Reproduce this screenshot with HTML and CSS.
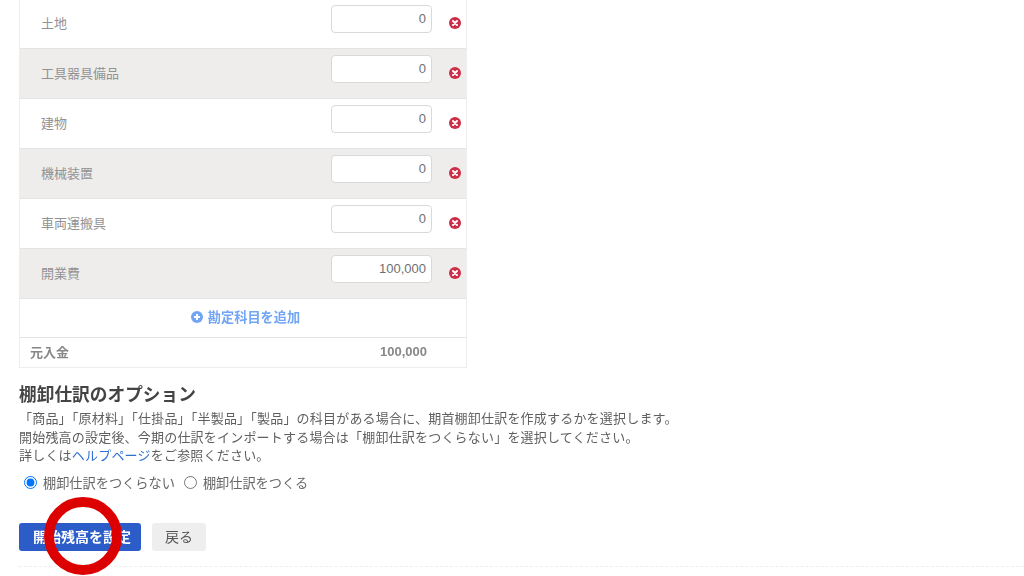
FILE: index.html
```html
<!DOCTYPE html>
<html lang="ja">
<head>
<meta charset="utf-8">
<title>開始残高の設定</title>
<link rel="stylesheet" href="styles.css">
</head>
<body>
<main class="page">
  <section class="ledger">
    <div class="row row-first">
      <span class="row-label">土地</span>
      <input class="amount" type="text" value="0">
      <svg class="remove" viewBox="0 0 12 12"><circle cx="6" cy="6" r="6" fill="#cc2e48"/><path d="M4 4l4 4M8 4l-4 4" stroke="#fff" stroke-width="2" stroke-linecap="round"/></svg>
    </div>
    <div class="row row-alt">
      <span class="row-label">工具器具備品</span>
      <input class="amount" type="text" value="0">
      <svg class="remove" viewBox="0 0 12 12"><circle cx="6" cy="6" r="6" fill="#cc2e48"/><path d="M4 4l4 4M8 4l-4 4" stroke="#fff" stroke-width="2" stroke-linecap="round"/></svg>
    </div>
    <div class="row">
      <span class="row-label">建物</span>
      <input class="amount" type="text" value="0">
      <svg class="remove" viewBox="0 0 12 12"><circle cx="6" cy="6" r="6" fill="#cc2e48"/><path d="M4 4l4 4M8 4l-4 4" stroke="#fff" stroke-width="2" stroke-linecap="round"/></svg>
    </div>
    <div class="row row-alt">
      <span class="row-label">機械装置</span>
      <input class="amount" type="text" value="0">
      <svg class="remove" viewBox="0 0 12 12"><circle cx="6" cy="6" r="6" fill="#cc2e48"/><path d="M4 4l4 4M8 4l-4 4" stroke="#fff" stroke-width="2" stroke-linecap="round"/></svg>
    </div>
    <div class="row">
      <span class="row-label">車両運搬具</span>
      <input class="amount" type="text" value="0">
      <svg class="remove" viewBox="0 0 12 12"><circle cx="6" cy="6" r="6" fill="#cc2e48"/><path d="M4 4l4 4M8 4l-4 4" stroke="#fff" stroke-width="2" stroke-linecap="round"/></svg>
    </div>
    <div class="row row-alt">
      <span class="row-label">開業費</span>
      <input class="amount" type="text" value="100,000">
      <svg class="remove" viewBox="0 0 12 12"><circle cx="6" cy="6" r="6" fill="#cc2e48"/><path d="M4 4l4 4M8 4l-4 4" stroke="#fff" stroke-width="2" stroke-linecap="round"/></svg>
    </div>
    <div class="add-row">
      <svg class="add-icon" viewBox="0 0 12 12"><circle cx="6" cy="6" r="6" fill="#72a5f5"/><path d="M6 3v6M3 6h6" stroke="#fff" stroke-width="2"/></svg>
      <span>勘定科目を追加</span>
    </div>
    <div class="total-row">
      <span>元入金</span>
      <span>100,000</span>
    </div>
  </section>

  <section class="options">
    <h2 class="options-title">棚卸仕訳のオプション</h2>
    <p class="options-text">「商品」「原材料」「仕掛品」「半製品」「製品」の科目がある場合に、期首棚卸仕訳を作成するかを選択します。<br>開始残高の設定後、今期の仕訳をインポートする場合は「棚卸仕訳をつくらない」を選択してください。<br>詳しくは<a class="link" href="#">ヘルプページ</a>をご参照ください。</p>
    <div class="radios">
      <label class="radio"><input type="radio" name="inv" checked><span>棚卸仕訳をつくらない</span></label>
      <label class="radio"><input type="radio" name="inv"><span>棚卸仕訳をつくる</span></label>
    </div>
    <div class="actions">
      <button class="btn btn-primary" type="button">開始残高を設定</button>
      <button class="btn btn-secondary" type="button">戻る</button>
      <span class="ring"></span>
    </div>
    <div class="divider"></div>
  </section>
</main>
</body>
</html>
```
FILE: styles.css
```css
html, body {
  margin: 0;
  height: 100%;
  overflow: hidden;
  background: #fff;
}
body {
  font-family: "Liberation Sans", "Noto Sans CJK JP", sans-serif;
  color: #555;
}
.page {
  width: 1024px;
  padding-left: 19px;
  box-sizing: border-box;
  margin-top: -1px;
  filter: blur(0.5px);
}
.ledger {
  width: 448px;
  border-left: 1px solid #eeeeee;
  border-right: 1px solid #eeeeee;
  border-bottom: 1px solid #eeeeee;
  box-sizing: border-box;
}
.row {
  height: 50px;
  box-sizing: border-box;
  display: flex;
  align-items: center;
  padding-left: 21px;
  border-bottom: 1px solid #e4e4e4;
  background: #fff;
}
.row-alt {
  background: #eeedec;
}
.row-label {
  flex: 1;
  font-size: 13px;
  color: #929292;
  margin-bottom: 3px;
}
.amount {
  width: 101px;
  height: 28px;
  box-sizing: border-box;
  border: 1px solid #d9d9d9;
  border-radius: 4px;
  background: #fff;
  font: 13px "Liberation Sans", sans-serif;
  color: #707070;
  text-align: right;
  padding: 0 5px 0 0;
  margin: 0 0 10px;
}
.remove {
  width: 12px;
  height: 12px;
  margin: 0 5px 2px 17px;
}
.add-row {
  height: 39px;
  box-sizing: border-box;
  display: flex;
  align-items: center;
  justify-content: center;
  gap: 5px;
  padding: 0 0 3px 5px;
  font-size: 13.2px;
  font-weight: 700;
  color: #72a5f5;
  border-bottom: 1px solid #e4e4e4;
}
.add-icon {
  width: 12px;
  height: 12px;
}
.total-row {
  height: 29px;
  box-sizing: border-box;
  display: flex;
  align-items: center;
  justify-content: space-between;
  padding: 0 39px 2px 10px;
  font-size: 13px;
  font-weight: 700;
  color: #888;
}
.options-title {
  margin: 17px 0 0;
  font-size: 17.7px;
  line-height: 20px;
  font-weight: 700;
  color: #444;
}
.options-text {
  margin: 5px 0 0;
  font-size: 13px;
  letter-spacing: 0.2px;
  line-height: 18.5px;
  color: #5f5f5f;
}
.link {
  color: #2f6fd0;
  text-decoration: none;
}
.radios {
  display: flex;
  gap: 9px;
  margin-top: 7px;
  padding-left: 5px;
  font-size: 13.2px;
  color: #666;
}
.radio {
  display: flex;
  align-items: center;
  gap: 6px;
}
.radio input {
  width: 13px;
  height: 13px;
  margin: 0;
}
.actions {
  position: relative;
  display: flex;
  gap: 11px;
  margin-top: 31px;
}
.btn {
  height: 28px;
  border-radius: 3px;
  border: 0;
  font-family: inherit;
  font-size: 14px;
  padding: 0 0 2px;
}
.btn-primary {
  width: 122px;
  padding-left: 4px;
  background: #2b5cc8;
  color: #fff;
  font-weight: 700;
}
.btn-secondary {
  width: 54px;
  background: #eeeeee;
  color: #555;
}
.ring {
  position: absolute;
  left: 25px;
  top: -26px;
  width: 78px;
  height: 78px;
  box-sizing: border-box;
  border: 10px solid #dc0000;
  border-radius: 50%;
}
.divider {
  width: 1005px;
  margin-top: 15px;
  border-top: 1px dashed #eeeeee;
}
```
